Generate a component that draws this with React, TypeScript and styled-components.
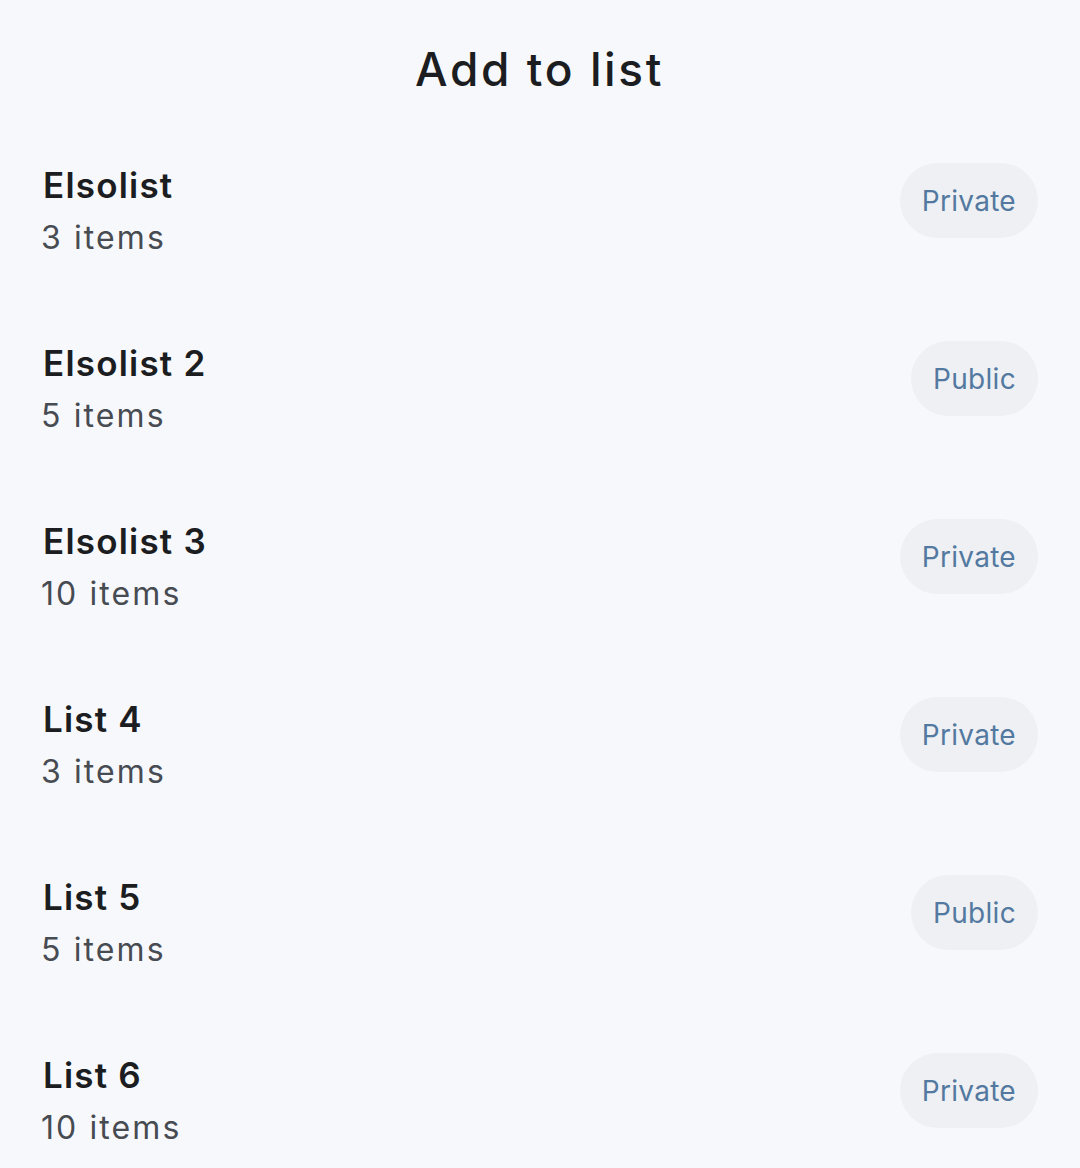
import React from "react";
import styled, { createGlobalStyle } from "styled-components";

const Global = createGlobalStyle`
  html, body {
    margin: 0;
    padding: 0;
    background: #f7f8fc;
  }
  body {
    font-family: Inter, "Open Sans", sans-serif;
  }
`;

const Page = styled.div`
  width: 1080px;
  min-height: 1168px;
  box-sizing: border-box;
  padding: 41px 42px 0 41px;
  background: #f7f8fc;
  display: flex;
  flex-direction: column;
`;

const Title = styled.h1`
  margin: 0 0 63px;
  text-align: center;
  font-size: 46px;
  line-height: 56px;
  font-weight: 500;
  letter-spacing: 2.6px;
  color: #1b1d21;
`;

const List = styled.ul`
  list-style: none;
  margin: 0;
  padding: 0;
  display: flex;
  flex-direction: column;
  gap: 75px;
`;

const Row = styled.li`
  display: flex;
  align-items: flex-start;
  justify-content: space-between;
`;

const Info = styled.div`
  display: flex;
  flex-direction: column;
  gap: 3px;
`;

const Name = styled.div`
  padding-left: 2px;
  font-size: 35px;
  line-height: 50px;
  font-weight: 600;
  letter-spacing: 1.2px;
  color: #1b1d21;
`;

const Count = styled.div`
  font-size: 32px;
  line-height: 50px;
  font-weight: 400;
  letter-spacing: 2.1px;
  color: #474b52;
`;

const Pill = styled.span`
  margin-top: 3px;
  height: 75px;
  padding: 0 22px;
  border-radius: 38px;
  background: #eef0f4;
  color: #5379a0;
  font-size: 28px;
  font-weight: 400;
  letter-spacing: 0.3px;
  display: inline-flex;
  align-items: center;
  justify-content: center;
`;

const lists = [
  { name: "Elsolist", count: 3, visibility: "Private" },
  { name: "Elsolist 2", count: 5, visibility: "Public" },
  { name: "Elsolist 3", count: 10, visibility: "Private" },
  { name: "List 4", count: 3, visibility: "Private" },
  { name: "List 5", count: 5, visibility: "Public" },
  { name: "List 6", count: 10, visibility: "Private" },
];

export default function App() {
  return (
    <>
      <Global />
      <Page>
        <Title>Add to list</Title>
        <List>
          {lists.map((l) => (
            <Row key={l.name}>
              <Info>
                <Name>{l.name}</Name>
                <Count>{l.count} items</Count>
              </Info>
              <Pill>{l.visibility}</Pill>
            </Row>
          ))}
        </List>
      </Page>
    </>
  );
}
